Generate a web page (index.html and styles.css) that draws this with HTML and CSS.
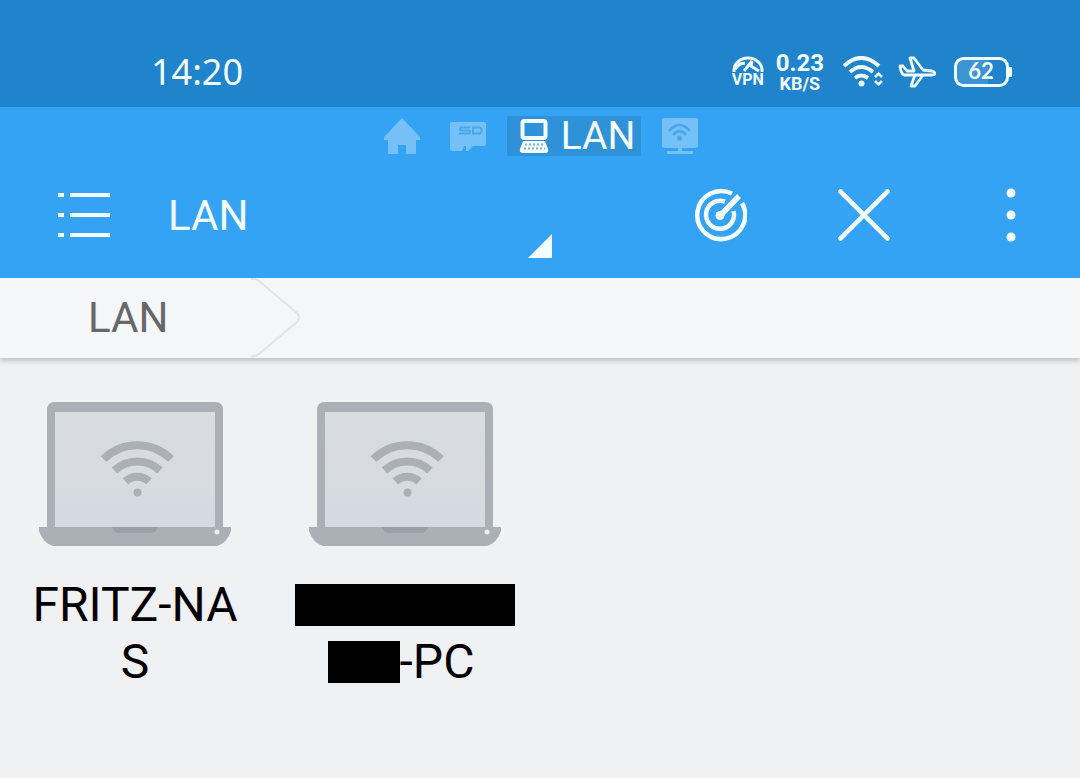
FILE: index.html
```html
<!DOCTYPE html>
<html lang="en">
<head>
<meta charset="utf-8">
<meta name="viewport" content="width=device-width, initial-scale=1">
<title>LAN</title>
<link rel="stylesheet" href="styles.css">
</head>
<body>
<div class="status">
  <time class="clock">14:20</time>
  <div class="indicators">
    <div class="vpn">
      <svg width="32" height="16" viewBox="0 0 32 16" fill="none" stroke="currentColor" stroke-width="3">
        <path d="M2 16V14A14 12 0 0 1 30 14V16"/>
        <path d="M3 13L8 8L13 7M12 15L20 5L19 10L27 15" stroke-width="3"/>
      </svg>
      <span>VPN</span>
    </div>
    <div class="speed"><span class="rate">0.23</span><span class="unit">KB/S</span></div>
    <svg class="wifi" width="42" height="32" viewBox="0 0 42 32" fill="none" stroke="currentColor" stroke-width="4">
      <path d="M2 10Q19 -6 37 10M8 16Q19 6 31 16M13 22Q19 17 26 22"/>
      <circle cx="19.500" cy="27.500" r="3" fill="currentColor" stroke="none"/>
      <path d="M33 21L36.500 17.500L40 21M33 25L36.500 28.500L40 25" stroke-width="2.500"/>
    </svg>
    <svg class="plane" width="38" height="32" viewBox="0 0 38 32" fill="none" stroke="currentColor" stroke-width="2.800" stroke-linejoin="round">
      <path d="M2 10H5L9 15H16L12 2H16L25 14L34 15Q37 16 37 17.500Q37 19 34 19H6Q3 18 2 10Z"/>
      <path d="M17 19L13 30H17L25 19"/>
    </svg>
    <svg width="58" height="32" viewBox="0 0 58 32" role="img" aria-label="Battery 62 percent">
      <path d="M2 6Q2 2 8 2H34V30H8Q2 30 2 24Z" fill="#3d94d5"/>
      <rect x="1.500" y="2.500" width="52" height="27" rx="8" fill="none" stroke="currentColor" stroke-width="3"/>
      <path d="M56.500 11V21" stroke="currentColor" stroke-width="3"/>
      <text class="charge" x="27" y="23" text-anchor="middle">62</text>
    </svg>
  </div>
</div>

<header class="header">
  <nav class="tabs" aria-label="Windows">
    <button class="tab" aria-label="Home">
      <svg width="36" height="36" viewBox="0 0 36 36" fill="currentColor"><path d="M18 0L36 19V22H32V36H22V27H14V36H4V22H0V19Z"/></svg>
    </button>
    <button class="tab" aria-label="SD card">
      <svg width="36" height="36" viewBox="0 0 36 36" fill="currentColor">
        <path d="M2 4H34Q36 4 36 6V26Q36 28 34 28H23L18 33H16V28H14L12 33H2Q0 33 0 31V6Q0 4 2 4Z"/>
        <path d="M20 9.500H11.500Q10 9.500 10 11Q10 12.500 11.500 12.500H18.500Q20 12.500 20 14Q20 15.500 18.500 15.500H9M23 9.500H29Q31.500 9.500 31.500 12.500Q31.500 15.500 29 15.500H23Z" fill="none" stroke="#48a6ec" stroke-width="2"/>
      </svg>
    </button>
    <button class="tab tab-active" aria-current="page">
      <svg width="30" height="36" viewBox="0 0 30 36">
        <rect x="3.500" y="3" width="23" height="17" rx="2" fill="none" stroke="currentColor" stroke-width="4"/>
        <path d="M4 23H26L29 31Q30 35 26 35H4Q0 35 1 31Z" fill="currentColor"/>
        <path d="M6 26.500H25M5 30.500H26" stroke="#80aed2" stroke-width="2" stroke-dasharray="2 2"/>
      </svg>
      <span>LAN</span>
    </button>
    <button class="tab" aria-label="Network">
      <svg width="36" height="36" viewBox="0 0 36 36" fill="currentColor">
        <rect width="36" height="30" rx="2"/><path d="M16 30H20V33H31V36H5V33H16Z"/>
        <g fill="none" stroke="#48a6ec" stroke-width="2.500"><path d="M7 13Q17.500 1 28 13M11 17Q17.500 9 24 17"/></g>
        <circle cx="17.500" cy="20" r="2.500" fill="#48a6ec"/>
      </svg>
    </button>
  </nav>
  <div class="toolbar">
    <button class="tool menu" aria-label="Menu">
      <svg width="52" height="52" viewBox="0 0 52 52" stroke="currentColor" stroke-width="4"><path d="M0 6H6M12 6H52M0 26H6M12 26H52M0 46H6M12 46H52"/></svg>
    </button>
    <button class="title">
      <span>LAN</span>
      <svg class="corner" width="24" height="24" viewBox="0 0 24 24"><path d="M24 0V24H0Z" fill="currentColor"/></svg>
    </button>
    <button class="tool" aria-label="Scan">
      <svg width="54" height="54" viewBox="0 0 54 54" fill="none" stroke="currentColor" stroke-width="4.500">
        <path d="M39 5.600A24 24 0 1 0 49 15"/>
        <path d="M32 13.700A14 14 0 1 0 40.500 23"/>
        <path d="M25 26L44 6L48 10L29 30Z" fill="currentColor" stroke="none"/>
        <circle cx="27" cy="27.500" r="4.500" fill="currentColor" stroke="none"/>
      </svg>
    </button>
    <button class="tool" aria-label="Close">
      <svg width="52" height="52" viewBox="0 0 52 52" stroke="currentColor" stroke-width="4.500"><path d="M1 1L51 51M51 1L1 51"/></svg>
    </button>
    <button class="tool more" aria-label="More options">
      <svg width="10" height="54" viewBox="0 0 10 54" fill="currentColor"><circle cx="5" cy="5" r="4.500"/><circle cx="5" cy="27" r="4.500"/><circle cx="5" cy="49" r="4.500"/></svg>
    </button>
  </div>
</header>

<nav class="crumbs" aria-label="Path">
  <a class="crumb" href="#">LAN</a>
  <svg width="50" height="80" viewBox="0 0 50 80" fill="none" stroke="#e2e3e5" stroke-width="2"><path d="M0 1Q4 0 8 3L46 35Q50 39 46 44L8 76Q4 79 0 78"/></svg>
</nav>

<svg class="defs" width="0" height="0" aria-hidden="true">
  <defs>
    <linearGradient id="screen" x1="0" y1="0" x2="0" y2="1"><stop offset="0" stop-color="#d9dde1"/><stop offset="1" stop-color="#d5d9e2"/></linearGradient>
    <symbol id="laptop" viewBox="0 0 192 144">
      <path d="M8 126V8Q8 0 16 0H176Q184 0 184 8V126Z" fill="#abafb6"/>
      <rect x="16" y="10" width="160" height="115" fill="url(#screen)"/>
      <path d="M0 125H192V129Q188 141 178 144H14Q4 141 0 129Z" fill="#abafb6"/>
      <path d="M73 125H119Q117 131 112 131H80Q75 131 73 125Z" fill="#9b9fa7"/>
      <circle cx="178" cy="130" r="2.500" fill="#eef0f2"/>
      <g fill="none" stroke="#abafb6" stroke-width="8">
        <path d="M64.500 57A48 48 0 0 1 132 57"/>
        <path d="M75.500 68.500A33 33 0 0 1 121 68.500"/>
        <path d="M86.500 79.500A17 17 0 0 1 110 79.500"/>
      </g>
      <circle cx="98.500" cy="90.500" r="4" fill="#abafb6"/>
    </symbol>
  </defs>
</svg>

<main class="hosts">
  <a class="host" href="#">
    <svg class="laptop"><use href="#laptop"/></svg>
    <span class="name">FRITZ-NAS</span>
  </a>
  <a class="host" href="#">
    <svg class="laptop"><use href="#laptop"/></svg>
    <span class="name"><span class="mask mask-long"></span><span class="mask mask-short"></span>-PC</span>
  </a>
</main>
</body>
</html>
```
FILE: styles.css
```css
* {
  box-sizing: border-box;
}

body {
  margin: 0;
  min-height: 100vh;
  background: #f0f1f3;
  color: #000;
  font-family: Roboto, "Liberation Sans", sans-serif;
}

button {
  border: 0;
  padding: 0;
  background: none;
  color: inherit;
  font: inherit;
}

a {
  color: inherit;
  text-decoration: none;
}

svg {
  display: block;
  flex: none;
}

.status {
  display: flex;
  align-items: center;
  justify-content: space-between;
  padding: 48px 68px 11px 151px;
  background: #2084cc;
  color: #effcff;
}

.clock {
  font-family: "Noto Sans", sans-serif;
  font-size: 36px;
  line-height: 48px;
}

.indicators {
  display: flex;
  align-items: center;
}

.vpn {
  display: flex;
  flex-direction: column;
  align-items: center;
  width: 32px;
  margin-right: 12px;
  font-size: 16px;
  font-weight: 700;
  line-height: 16px;
}

.speed {
  display: flex;
  flex-direction: column;
  align-items: center;
  margin-right: 18px;
  font-weight: 700;
}

.rate {
  font-size: 24px;
  line-height: 23px;
}

.unit {
  font-size: 18px;
  line-height: 18px;
}

.wifi {
  margin-right: 14px;
}

.plane {
  margin-right: 18px;
}

.charge {
  fill: currentColor;
  font-family: Lato, sans-serif;
  font-size: 22px;
  font-weight: 700;
}

.header {
  position: relative;
  z-index: 1;
  background: #35a3f3;
  color: #f2fdff;
}

.tabs {
  display: flex;
  align-items: center;
  justify-content: center;
  padding: 9px 0 0 2px;
}

.tab {
  display: flex;
  align-items: center;
  justify-content: center;
  width: 66px;
  height: 40px;
  color: #74c0f7;
}

.tab-active {
  gap: 12px;
  width: auto;
  margin: 0 6px;
  padding: 0 6px 0 12px;
  background: #2f91d8;
  color: #f2fdff;
  font-size: 39px;
  line-height: 40px;
}

.toolbar {
  display: flex;
  align-items: flex-start;
  padding-bottom: 4px;
}

.tool {
  display: flex;
  align-items: center;
  justify-content: center;
  flex: none;
  width: 144px;
  height: 118px;
}

.menu {
  width: 168px;
}

.more {
  padding-left: 6px;
}

.title {
  display: flex;
  align-items: center;
  justify-content: space-between;
  flex: 1;
  height: 118px;
  margin-right: 96px;
  font-size: 42px;
}

.corner {
  align-self: flex-end;
  margin-bottom: 16px;
}

.crumbs {
  display: flex;
  height: 80px;
  background: #f5f6f8;
  box-shadow: 0 2px 6px rgba(0, 0, 0, 0.25);
}

.crumb {
  width: 251px;
  padding-left: 88px;
  color: #666769;
  font-size: 42px;
  line-height: 80px;
}

.defs {
  position: absolute;
}

.hosts {
  display: grid;
  grid-template-columns: repeat(4, 1fr);
  padding-top: 44px;
}

.host {
  display: flex;
  flex-direction: column;
  align-items: center;
  gap: 30px;
}

.laptop {
  width: 192px;
  height: 144px;
}

.name {
  width: 222px;
  font-size: 48px;
  line-height: 57px;
  text-align: center;
  word-break: break-all;
}

.mask {
  display: inline-block;
  height: 42px;
  background: #000;
  vertical-align: -5px;
}

.mask-long {
  width: 220px;
}

.mask-short {
  width: 72px;
  margin-left: -8px;
}
```
